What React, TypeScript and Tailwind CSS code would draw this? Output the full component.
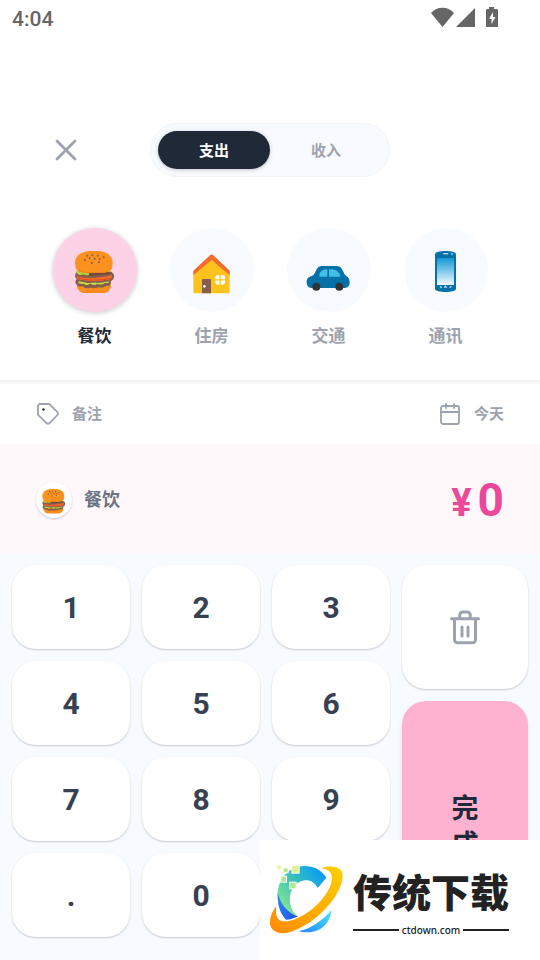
import { useState } from 'react';
import type { ReactNode } from 'react';

function Burger({ className }: { className: string }) {
  return (
    <svg viewBox="0 0 144 144" className={className} aria-hidden="true">
      <path d="M17 116h103c-1 16-9 25-24 25H42c-15 0-23-10-25-25z" fill="#fb8c1e" />
      <path
        d="M15 80c-4 7-4 14 2 19-6 7-5 14 1 18 7 8 14 2 19 5 8 9 18 3 25 3 9 5 16-2 23-1 10 3 15-2 20-4 11 1 17-5 14-14 11-6 14-18 6-25-7-14-92-18-110-1z"
        fill="#875d4b"
      />
      <path d="M16 74c23-7 84-8 104 3-15 7-27 3-36 6-14 2-19 2-28 4-8 3-14-4-23-1-9 3-18-3-17-12z" fill="#b5cf3b" />
      <path d="M55 79c20-5 55-4 67 3-20 6-47 4-69 8z" fill="#75493b" />
      <path d="M18 91c29 9 73 4 104-4 3 7-1 13-14 15-28 6-68 4-85-2-5-2-7-6-5-9z" fill="#f4672a" />
      <path d="M22 96c27 8 65 9 94 1" fill="none" stroke="#df4e24" strokeWidth="3" />
      <path
        d="M18 107c6-6 21-1 29 1 12 3 19-3 30 0 14 3 26-6 41-3-1 10-10 8-17 8-7 8-17 4-23 3-8 6-15 3-20-1-8 6-16 5-21 0-8 2-17-1-19-8z"
        fill="#c0dc45"
        stroke="#875d4b"
        strokeWidth="4"
      />
      <path d="M12 50c0-23 22-35 49-35h16c28 0 48 13 48 36 0 19-13 30-40 30H48C24 81 12 69 12 50z" fill="#fb921f" />
      <path d="M13 59c6 16 20 18 36 19h37c21 0 34-7 38-19 0 15-13 22-38 22H49c-25 0-35-9-36-22z" fill="#f58416" />
      <g fill="#875d4b">
        <circle cx="49" cy="29" r="3" />
        <circle cx="64" cy="27" r="3" />
        <circle cx="80" cy="29" r="3" />
        <circle cx="98" cy="34" r="3" />
        <circle cx="42" cy="42" r="3" />
        <circle cx="56" cy="37" r="3" />
        <circle cx="71" cy="38" r="3" />
        <circle cx="86" cy="39" r="3" />
        <circle cx="62" cy="51" r="3" />
        <circle cx="84" cy="49" r="3" />
      </g>
    </svg>
  );
}

function House({ className }: { className: string }) {
  return (
    <svg viewBox="0 0 144 144" className={className} aria-hidden="true">
      <path d="M16 77l55-46 54 46v60c0 3-1 5-4 5H21c-3 0-5-2-5-5z" fill="#fdc21c" />
      <path d="M16 74l50-46c3-3 7-3 10 0l49 46v14L71 42 16 88z" fill="#f26c30" />
      <path d="M42 103c0-3 1-4 4-4h20c2 0 3 1 3 4v39H42z" fill="#875d4b" />
      <circle cx="49" cy="121" r="4" fill="#fff" />
      <rect x="82" y="87" width="29" height="29" rx="7" fill="#fff" />
      <path d="M96.500 87v29M82 101.500h29" stroke="#fdc21c" strokeWidth="4" />
    </svg>
  );
}

function Car({ className }: { className: string }) {
  return (
    <svg viewBox="0 0 144 144" className={className} aria-hidden="true">
      <path
        d="M5 109c0-12 5-17 17-20 7-3 8-12 14-21 5-7 10-8 18-8h38c11 0 16 3 20 11 4 7 5 13 11 18 8 5 11 11 11 20 0 10-5 17-15 17H19c-9 0-14-7-14-17z"
        fill="#0670a8"
      />
      <path d="M43 91c0-12 7-21 24-21v22H44z" fill="#40c0e7" />
      <path d="M72 70c20-1 30 5 34 21l-2 1H72z" fill="#40c0e7" />
      <circle cx="34" cy="122" r="12" fill="#333" />
      <circle cx="103" cy="122" r="12" fill="#333" />
    </svg>
  );
}

function Phone({ className }: { className: string }) {
  return (
    <svg viewBox="0 0 144 144" className={className} aria-hidden="true">
      <defs>
        <linearGradient id="screen" x1="0" y1="0" x2="0" y2="1">
          <stop offset="0" stopColor="#1398d3" />
          <stop offset="1" stopColor="#f2fbff" />
        </linearGradient>
      </defs>
      <path d="M39 25c0-13 63-13 63 0v104c0 12-63 12-63 0z" fill="#0670a8" />
      <rect x="45" y="36" width="51" height="81" fill="url(#screen)" />
      <rect x="63" y="21" width="16" height="4" rx="2" fill="#b9e3f4" />
      <circle cx="90" cy="24" r="3" fill="#8bcde9" />
      <path d="M54 121l5 4M67 125l3-4 4 4M83 125l5-4" fill="none" stroke="#b9e3f4" strokeWidth="4" />
    </svg>
  );
}

function SiteLogo() {
  return (
    <svg viewBox="13 19 231 216" className="h-[72px] w-[77px] shrink-0" aria-hidden="true">
      <defs>
        <linearGradient id="ring" gradientUnits="userSpaceOnUse" x1="50" y1="160" x2="180" y2="50">
          <stop offset="0" stopColor="#8eea91" />
          <stop offset="0.500" stopColor="#3cc4b4" />
          <stop offset="1" stopColor="#0b9cf5" />
        </linearGradient>
        <linearGradient id="orbit" x1="0" y1="1" x2="1" y2="0">
          <stop offset="0" stopColor="#ff8a00" />
          <stop offset="1" stopColor="#ffd000" />
        </linearGradient>
        <linearGradient id="tail" x1="0" y1="1" x2="1" y2="0">
          <stop offset="0" stopColor="#2587ff" />
          <stop offset="1" stopColor="#49e4ff" />
        </linearGradient>
        <linearGradient id="crescent" x1="0" y1="0" x2="1" y2="1">
          <stop offset="0" stopColor="#2a8be8" />
          <stop offset="1" stopColor="#2450ee" />
        </linearGradient>
      </defs>
      <path
        d="M188 60C172 36 150 25 122 25 74 27 42 64 42 112c0 36 14 62 36 76l26-10C84 162 76 138 79 116c4-28 22-46 46-48 15-1 29 7 37 23z"
        fill="url(#ring)"
      />
      <path d="M42 103c-2 40 8 68 30 88l32-13C74 166 50 143 42 103z" fill="url(#crescent)" />
      <path d="M106 220c34-5 71-32 97-62-3 40-34 68-74 66-9 0-16-1-23-4z" fill="url(#tail)" />
      <path
        d="M171 32c29-10 66-8 66 24-1 57-81 144-157 167-38 11-64-5-61-33 1-17 9-33 19-46-4 30 2 47 25 47 44 0 116-51 138-109 10-28 0-48-30-50z"
        fill="url(#orbit)"
        stroke="#fff"
        strokeWidth="8"
        paintOrder="stroke"
      />
      <g stroke="#fff" strokeWidth="6" paintOrder="stroke">
        <rect x="41" y="24" width="11" height="11" fill="#e6f29c" />
        <rect x="60" y="32" width="12" height="12" fill="#b7e986" />
        <rect x="86" y="25" width="19" height="20" fill="#e1ef91" />
        <rect x="53" y="57" width="14" height="15" fill="#a9e891" />
        <rect x="79" y="75" width="17" height="17" fill="#b0e991" />
      </g>
    </svg>
  );
}

function StatusBar() {
  return (
    <div className="flex h-9 items-center justify-between pl-3 pr-10 text-[#666]">
      <span className="pt-0.5 text-[21px] leading-9 font-medium">4:04</span>
      <svg viewBox="0 0 70 22" className="h-[22px] w-[70px]" fill="currentColor" aria-hidden="true">
        <path d="M12.500 20L1 6c6-7 17-7 23 0zM45 1v19H26z" />
        <path
          fillRule="evenodd"
          d="M59 0h5v2h2.500C67.500 2 68 2.500 68 3.500v15c0 1-.5 1.500-1.500 1.500h-9c-1 0-1.500-.5-1.500-1.500v-15c0-1 .5-1.500 1.500-1.500H59zm4 5l-4 7h2.500v5l4-7H63z"
        />
      </svg>
    </div>
  );
}

function LineIcon({ className, width, children }: { className: string; width: number; children: ReactNode }) {
  return (
    <svg
      viewBox="0 0 24 24"
      className={className}
      fill="none"
      stroke="currentColor"
      strokeWidth={width}
      strokeLinecap="round"
      strokeLinejoin="round"
      aria-hidden="true"
    >
      {children}
    </svg>
  );
}

const categories = [
  { name: '餐饮', Icon: Burger },
  { name: '住房', Icon: House },
  { name: '交通', Icon: Car },
  { name: '通讯', Icon: Phone },
];

const digits = ['1', '2', '3', '4', '5', '6', '7', '8', '9', '.', '0'];

export default function App() {
  const [type, setType] = useState('支出');
  const [selected, setSelected] = useState(0);
  const [amount, setAmount] = useState('0');
  const { name, Icon: SelectedIcon } = categories[selected];

  const press = (key: string) => {
    if (key === '.' && amount.includes('.')) return;
    setAmount(amount === '0' && key !== '.' ? key : amount + key);
  };

  return (
    <div className="relative flex min-h-screen flex-col overflow-hidden bg-white font-[Roboto,'Noto_Sans_CJK_SC',sans-serif]">
      <StatusBar />

      <header className="mt-[87px] grid grid-cols-[60px_1fr_60px] items-center px-9">
        <button type="button" aria-label="关闭" className="flex justify-center text-[#9ca3af]">
          <LineIcon className="size-6" width={2.8}>
            <path d="M3 3l18 18M21 3L3 21" />
          </LineIcon>
        </button>
        <div className="flex justify-self-center rounded-full border border-[#f3f4f6] bg-[#f7faff] p-[7px]">
          {['支出', '收入'].map((label) => (
            <button
              key={label}
              type="button"
              aria-pressed={type === label}
              onClick={() => setType(label)}
              className={`h-[38px] w-28 rounded-full pt-0.5 text-[15px] font-bold ${
                type === label ? 'bg-[#1f2937] text-white shadow-[0_1px_4px_rgba(0,0,0,0.2)]' : 'text-[#9ca3af]'
              }`}
            >
              {label}
            </button>
          ))}
        </div>
      </header>

      <div className="mt-[51px] grid grid-cols-4 px-9 pb-8">
        {categories.map(({ name, Icon }, i) => (
          <button
            key={name}
            type="button"
            aria-pressed={selected === i}
            onClick={() => setSelected(i)}
            className="flex flex-col items-center gap-3"
          >
            <span
              className={`flex size-[84px] items-center justify-center rounded-full ${
                selected === i ? 'bg-[#fdd2e7] shadow-[0_1px_4px_1px_rgba(0,0,0,0.16)]' : 'bg-[#f7faff]'
              }`}
            >
              <Icon className="size-12" />
            </span>
            <span className={`text-[17px] leading-6 font-bold ${selected === i ? 'text-[#1f2937]' : 'text-[#9ca3af]'}`}>
              {name}
            </span>
          </button>
        ))}
      </div>

      <div className="h-1 bg-linear-to-b from-[#f0f0f0] to-[#fafafa]" />

      <div className="flex h-[60px] items-center justify-between px-9 text-[15px] font-bold text-[#9ca3af]">
        <button type="button" className="flex items-center gap-3">
          <LineIcon className="size-6" width={1.8}>
            <path d="M2 4a2 2 0 0 1 2-2h8.500a2 2 0 0 1 1.400.6l7.500 7.500a2 2 0 0 1 0 2.900l-7.900 8.200a2 2 0 0 1-2.900 0L2.600 13.400A2 2 0 0 1 2 12z" />
            <circle cx="7.500" cy="7.500" r="1.200" fill="#1f2937" stroke="none" />
          </LineIcon>
          备注
        </button>
        <button type="button" className="flex items-center gap-3">
          <LineIcon className="size-6" width={1.8}>
            <rect x="3" y="4" width="18" height="18" rx="2" />
            <path d="M8 2v4M16 2v4M3 10h18" />
          </LineIcon>
          今天
        </button>
      </div>

      <div className="flex h-[109px] items-center justify-between bg-[#fef8fa] px-9 pt-0.5">
        <div className="flex items-center gap-3">
          <span className="flex size-9 items-center justify-center rounded-full bg-white shadow-[0_1px_2px_rgba(0,0,0,0.2)]">
            <SelectedIcon className="size-7" />
          </span>
          <span className="text-[18px] font-bold text-[#6b7280]">{name}</span>
        </div>
        <div className="flex items-baseline gap-1.5 font-bold text-[#ec4899]">
          <span className="text-[38px] leading-9">¥</span>
          <span className="text-[46px] leading-[54px]">{amount}</span>
        </div>
      </div>

      <div className="flex flex-1 items-start gap-3 bg-[#f7faff] p-3">
        <div className="grid flex-1 auto-rows-[84px] grid-cols-3 gap-3">
          {digits.map((digit) => (
            <button
              key={digit}
              type="button"
              onClick={() => press(digit)}
              className="rounded-3xl bg-white pt-0.5 text-3xl font-bold text-[#374151] shadow-[0_1px_2px_rgba(0,0,0,0.2)]"
            >
              {digit}
            </button>
          ))}
        </div>
        <div className="flex w-[126px] flex-col gap-3">
          <button
            type="button"
            aria-label="删除"
            onClick={() => setAmount('0')}
            className="flex h-[124px] items-center justify-center rounded-3xl bg-white text-[#9ca3af] shadow-[0_1px_2px_rgba(0,0,0,0.2)]"
          >
            <LineIcon className="size-9" width={2}>
              <path d="M3 6.500h18M5 6.500v14a2 2 0 0 0 2 2h10a2 2 0 0 0 2-2v-14M8.500 6V4a2 2 0 0 1 2-2h3a2 2 0 0 1 2 2v2M10 12v6M14 12v6" />
            </LineIcon>
          </button>
          <button
            type="button"
            className="flex h-[236px] flex-col items-center justify-center rounded-3xl bg-[#ffb2cf] pt-4 text-[27px] leading-9 font-bold text-[#1f2937] shadow-md"
          >
            <span>完</span>
            <span>成</span>
          </button>
        </div>
      </div>

      <a
        href="#download"
        className="absolute right-0 bottom-0 flex h-[120px] w-[280px] items-center gap-2 bg-white pl-2 text-[#222]"
      >
        <SiteLogo />
        <span className="flex flex-col pt-2">
          <span className="text-[39px] leading-[52px] font-black">传统下载</span>
          <span className="flex items-center gap-[3px] font-['Noto_Sans',sans-serif] text-[10px] leading-5 font-medium">
            <span className="h-0.5 flex-1 bg-current" />
            ctdown.com
            <span className="h-0.5 flex-1 bg-current" />
          </span>
        </span>
      </a>
    </div>
  );
}
